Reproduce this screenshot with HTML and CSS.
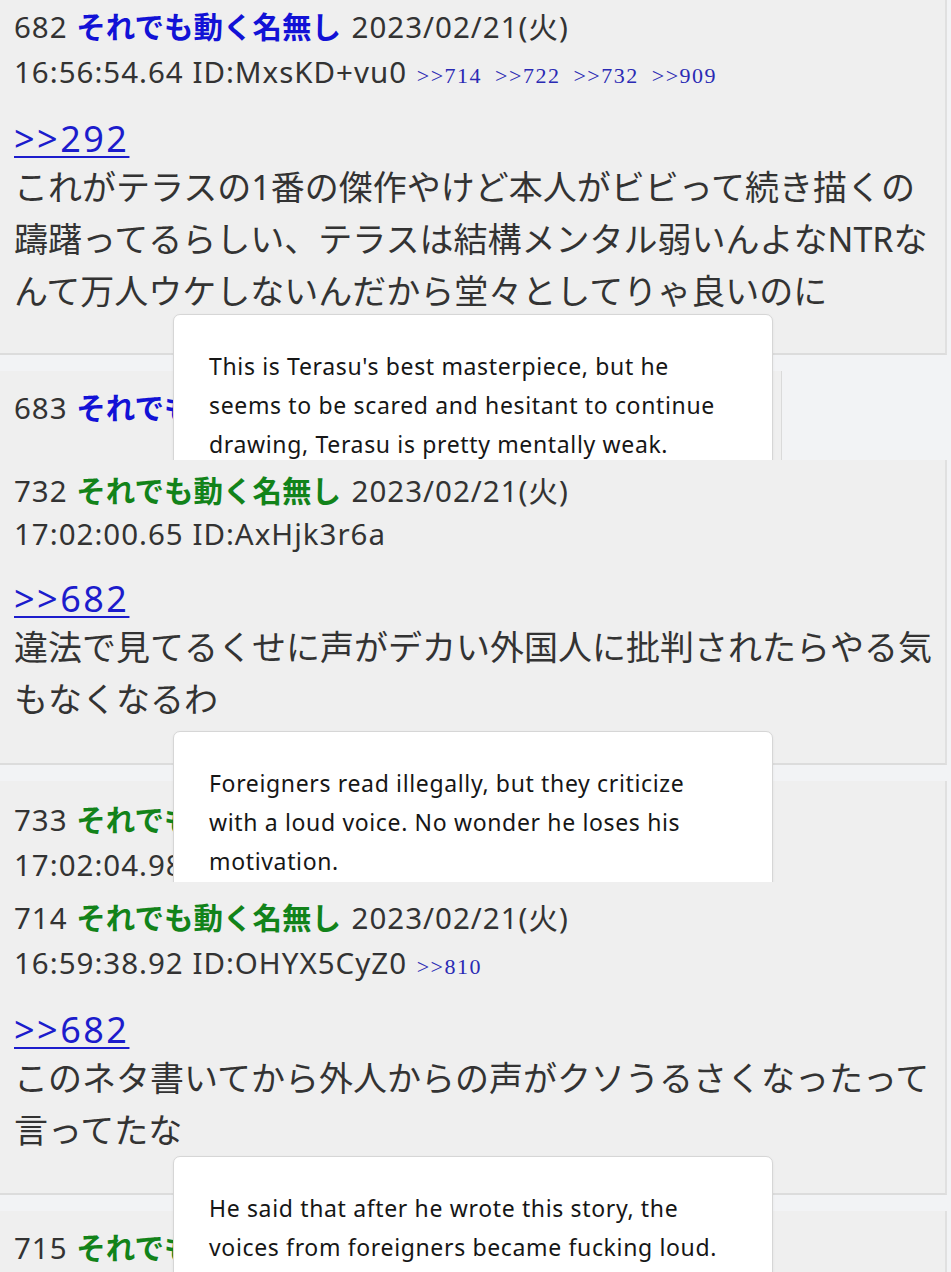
FILE: index.html
```html
<!DOCTYPE html>
<html lang="ja">
<head>
<meta charset="utf-8">
<title>それでも動く名無し</title>
<link rel="stylesheet" href="styles.css">
</head>
<body>
<section class="seg seg1">
  <article class="post">
    <div class="meta">
      <div>682 <b class="name blue">それでも動く名無し</b> 2023/02/21(火)</div>
      <div>16:56:54.64 ID:MxsKD+vu0 <span class="refs"><a>&gt;&gt;714</a> <a>&gt;&gt;722</a> <a>&gt;&gt;732</a> <a>&gt;&gt;909</a></span></div>
    </div>
    <div class="msg">
      <a class="anchor">&gt;&gt;292</a>
      <p class="text">これがテラスの1番の傑作やけど本人がビビって続き描くの<br>躊躇ってるらしい、テラスは結構メンタル弱いんよなNTRな<br>んて万人ウケしないんだから堂々としてりゃ良いのに</p>
    </div>
  </article>
  <div class="band">
    <div class="tip tip1">
      <p>This is Terasu's best masterpiece, but he<br>seems to be scared and hesitant to continue<br>drawing, Terasu is pretty mentally weak.</p>
    </div>
    <article class="post next narrow">
      <div class="meta">
        <div>683 <b class="name blue">それでも動く名無し</b> 2023/02/21(火)</div>
      </div>
    </article>
  </div>
</section>

<section class="seg seg2">
  <article class="post">
    <div class="meta">
      <div>732 <b class="name green">それでも動く名無し</b> 2023/02/21(火)</div>
      <div>17:02:00.65 ID:AxHjk3r6a</div>
    </div>
    <div class="msg">
      <a class="anchor">&gt;&gt;682</a>
      <p class="text">違法で見てるくせに声がデカい外国人に批判されたらやる気<br>もなくなるわ</p>
    </div>
  </article>
  <div class="band">
    <div class="tip tip2">
      <p>Foreigners read illegally, but they criticize<br>with a loud voice. No wonder he loses his<br>motivation.</p>
    </div>
    <article class="post next">
      <div class="meta">
        <div>733 <b class="name green">それでも動く名無し</b> 2023/02/21(火)</div>
        <div>17:02:04.98 ID:AxHjk3r6a</div>
      </div>
    </article>
  </div>
</section>

<section class="seg seg3">
  <article class="post">
    <div class="meta">
      <div>714 <b class="name green">それでも動く名無し</b> 2023/02/21(火)</div>
      <div>16:59:38.92 ID:OHYX5CyZ0 <span class="refs"><a>&gt;&gt;810</a></span></div>
    </div>
    <div class="msg">
      <a class="anchor">&gt;&gt;682</a>
      <p class="text">このネタ書いてから外人からの声がクソうるさくなったって<br>言ってたな</p>
    </div>
  </article>
  <div class="band">
    <div class="tip tip3">
      <p>He said that after he wrote this story, the<br>voices from foreigners became fucking loud.</p>
    </div>
    <article class="post next">
      <div class="meta">
        <div>715 <b class="name green">それでも動く名無し</b> 2023/02/21(火)</div>
        <div>16:59:40.12 ID:OHYX5CyZ0</div>
      </div>
    </article>
  </div>
</section>
</body>
</html>
```

FILE: styles.css
```css
* {
  box-sizing: border-box;
}

body {
  margin: 0;
  background: #f2f3f5;
  font-family: "Noto Sans", "Noto Sans CJK JP", sans-serif;
  color: #333333;
}

.seg {
  position: relative;
  overflow: hidden;
  height: 460px;
}

.seg2 {
  height: 422px;
}

.seg3 {
  height: 390px;
}

.post {
  width: 947px;
  background: #efefef;
  border-right: 2px solid #e0e0e0;
  border-bottom: 2px solid #dcdcdc;
  padding: 4px 14px 36px;
}

.seg2 > .post {
  padding-top: 8px;
  padding-bottom: 38px;
}

.seg2 > .post .msg {
  margin-top: 21px;
}

.seg3 > .post {
  padding-top: 13px;
  padding-bottom: 37px;
}

.seg2 > .post .meta > div + div {
  margin-top: -2px;
}

.meta {
  font-size: 29.5px;
  line-height: 45px;
  letter-spacing: 1px;
  white-space: nowrap;
}

.name {
  font-weight: 700;
  letter-spacing: 0;
  margin-right: 2px;
}

.blue {
  color: #1212d6;
}

.green {
  color: #12831a;
}

.refs {
  font-family: "Liberation Serif", serif;
  font-size: 22px;
  letter-spacing: 1.5px;
  word-spacing: 6px;
  color: #2a2ab4;
  margin-left: 1px;
}

.msg {
  margin-top: 19px;
}

.anchor {
  display: block;
  font-size: 36px;
  line-height: 44px;
  letter-spacing: 2.5px;
  color: #1c1ccc;
  text-decoration: underline;
  text-decoration-thickness: 2px;
  text-underline-offset: 4px;
}

.text {
  margin: 0;
  font-size: 34px;
  line-height: 52px;
  white-space: nowrap;
}

.band {
  position: relative;
  padding-top: 16px;
}

.next {
  padding-top: 16px;
  border-bottom: none;
}

.seg3 .next {
  padding-top: 14px;
}

.narrow {
  width: 782px;
  padding-top: 14px;
  border-right: 1px solid #dadada;
}

.tip {
  position: absolute;
  left: 173px;
  width: 600px;
  z-index: 2;
  background: #ffffff;
  border: 1px solid #d6d6d6;
  border-radius: 7px;
  box-shadow: 0 1px 3px rgba(0, 0, 0, 0.06);
  padding: 32px 20px 40px 35px;
  color: #161616;
  font-family: "Noto Sans", sans-serif;
  font-size: 23px;
  line-height: 39px;
  letter-spacing: 0.65px;
  white-space: nowrap;
}

.tip p {
  margin: 0;
}

.tip1 {
  top: -41px;
}

.tip2 {
  top: -34px;
}

.tip3 {
  top: -39px;
}
```
